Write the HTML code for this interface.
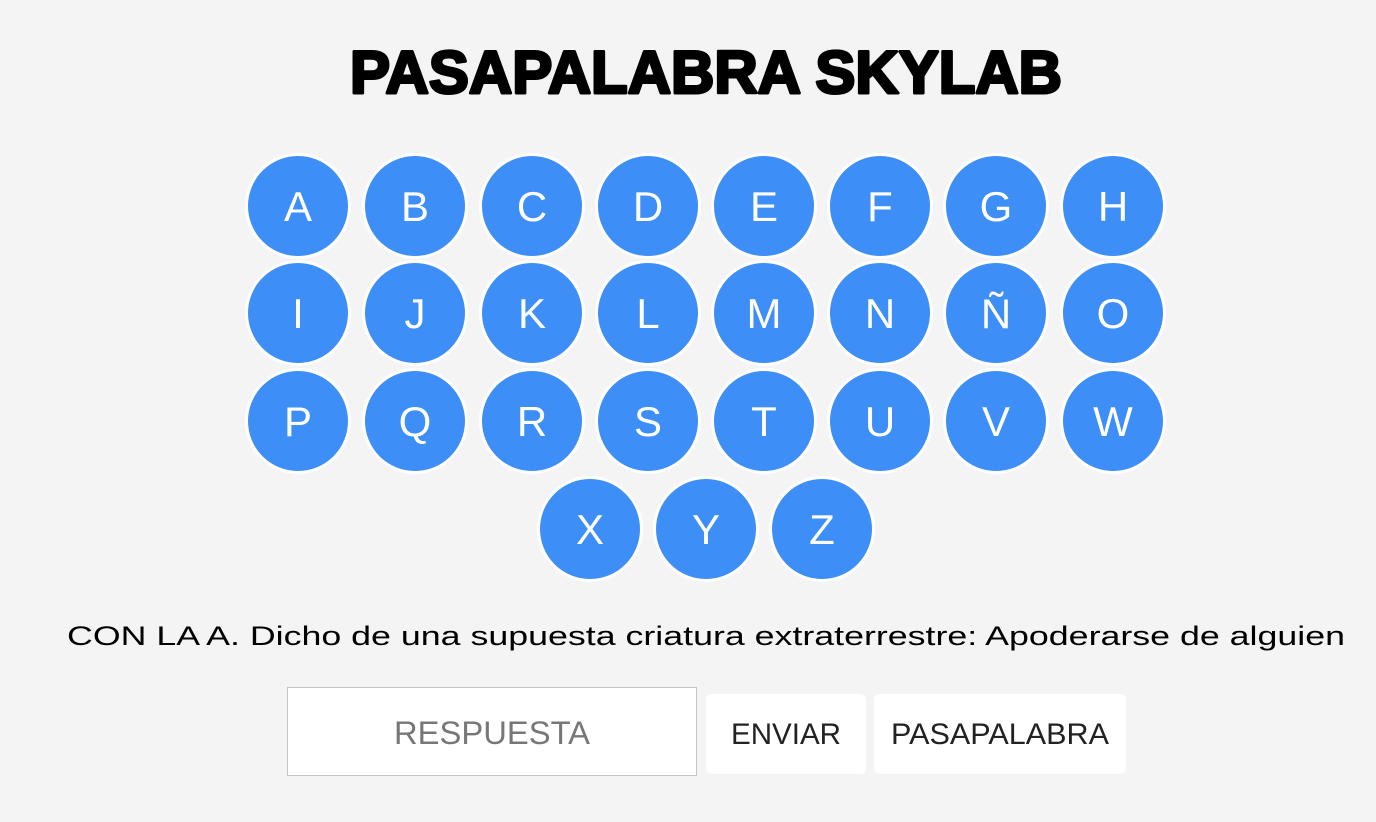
<!DOCTYPE html>
<html><head><meta charset="utf-8"><style>
html,body{margin:0;padding:0;background:#f4f4f4;width:1376px;height:822px;overflow:hidden;font-family:"Liberation Sans",sans-serif}
.c{position:absolute;width:100px;height:100px;border-radius:50%;background:#3e8ef7;border:3px solid #fff;color:#fff;font-size:42px;line-height:102px;text-align:center}
.box{position:absolute;background:#fff}
svg{position:absolute;left:0;top:0}
</style></head><body>
<div class="c" style="left:245px;top:153px">A</div>
<div class="c" style="left:362px;top:153px">B</div>
<div class="c" style="left:479px;top:153px">C</div>
<div class="c" style="left:595px;top:153px">D</div>
<div class="c" style="left:711px;top:153px">E</div>
<div class="c" style="left:827px;top:153px">F</div>
<div class="c" style="left:943px;top:153px">G</div>
<div class="c" style="left:1060px;top:153px">H</div>
<div class="c" style="left:245px;top:260px">I</div>
<div class="c" style="left:362px;top:260px">J</div>
<div class="c" style="left:479px;top:260px">K</div>
<div class="c" style="left:595px;top:260px">L</div>
<div class="c" style="left:711px;top:260px">M</div>
<div class="c" style="left:827px;top:260px">N</div>
<div class="c" style="left:943px;top:260px">Ñ</div>
<div class="c" style="left:1060px;top:260px">O</div>
<div class="c" style="left:245px;top:368px">P</div>
<div class="c" style="left:362px;top:368px">Q</div>
<div class="c" style="left:479px;top:368px">R</div>
<div class="c" style="left:595px;top:368px">S</div>
<div class="c" style="left:711px;top:368px">T</div>
<div class="c" style="left:827px;top:368px">U</div>
<div class="c" style="left:943px;top:368px">V</div>
<div class="c" style="left:1060px;top:368px">W</div>
<div class="c" style="left:537px;top:476px">X</div>
<div class="c" style="left:653px;top:476px">Y</div>
<div class="c" style="left:769px;top:476px">Z</div>
<div class="box" style="left:287px;top:687px;width:410px;height:89px;border:1px solid #c4c4c4;box-sizing:border-box"></div>
<div class="box" style="left:706px;top:694px;width:160px;height:80px;border-radius:6px"></div>
<div class="box" style="left:874px;top:694px;width:252px;height:80px;border-radius:6px"></div>
<svg width="1376" height="822">
<text x="350" y="93" textLength="712" lengthAdjust="spacingAndGlyphs" font-family="Liberation Sans" font-weight="900" font-size="60" fill="#000" stroke="#000" stroke-width="3" stroke-linejoin="round">PASAPALABRA SKYLAB</text>
<text x="67" y="645" textLength="1278" lengthAdjust="spacingAndGlyphs" font-family="Liberation Sans" font-size="27" fill="#000">CON LA A. Dicho de una supuesta criatura extraterrestre: Apoderarse de alguien</text>
<text x="394" y="744" textLength="196" lengthAdjust="spacingAndGlyphs" font-family="Liberation Sans" font-size="32" fill="#777">RESPUESTA</text>
<text x="731" y="744" textLength="110" lengthAdjust="spacingAndGlyphs" font-family="Liberation Sans" font-size="30" fill="#222">ENVIAR</text>
<text x="891" y="744" textLength="218" lengthAdjust="spacingAndGlyphs" font-family="Liberation Sans" font-size="30" fill="#222">PASAPALABRA</text>
</svg>
</body></html>
